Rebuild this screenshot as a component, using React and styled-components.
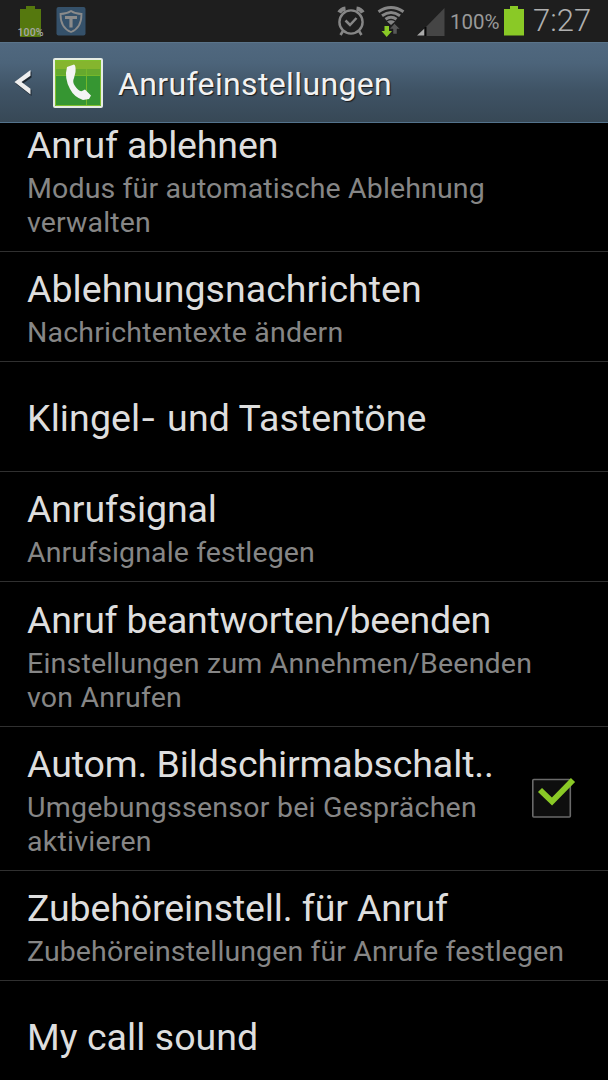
import React from 'react';
import styled, { createGlobalStyle } from 'styled-components';

const color = {
  status: '#1e1e1e',
  icon: '#868686',
  green: '#8ac926',
  title: '#dedede',
  summary: '#868686',
  divider: '#303030',
};

const GlobalStyle = createGlobalStyle`
  * {
    box-sizing: border-box;
  }

  body {
    margin: 0;
    background-color: #000;
    font-family: Roboto, 'Liberation Sans', sans-serif;
  }
`;

const Screen = styled.div`
  width: 608px;
  height: 1080px;
  display: flex;
  flex-direction: column;
  background-color: #000;
  overflow: hidden;
`;

const StatusBar = styled.div`
  height: 42px;
  flex-shrink: 0;
  display: flex;
  justify-content: space-between;
  background-color: ${color.status};
`;

const StatusGroup = styled.div`
  display: flex;
  align-items: center;
`;

const StatusIcon = styled.svg`
  display: block;
  flex-shrink: 0;
  margin-left: ${props => props.$gap || 0}px;
`;

const Percent = styled.span`
  width: 53px;
  margin-left: 5px;
  padding-top: 1px;
  font-size: 20.5px;
  letter-spacing: 0;
  line-height: 42px;
  color: #999;
  white-space: nowrap;
`;

const Clock = styled.span`
  width: 75px;
  margin-left: 9px;
  font-size: 31px;
  font-weight: 300;
  line-height: 42px;
  color: #b0b0b0;
  white-space: nowrap;
`;

const Header = styled.div`
  height: 81px;
  flex-shrink: 0;
  display: flex;
  align-items: center;
  background: linear-gradient(#50687f 0%, #4c647a 25%, #3f5365 60%, #374856 100%);
  border-top: 1px solid #5a748a;
  border-bottom: 1px solid #54738c;
`;

const HeaderTitle = styled.div`
  margin: 2px 0 0 15px;
  font-size: 32px;
  letter-spacing: 0.36px;
  line-height: 38px;
  color: #f2f2f2;
  text-shadow: 1px 1px 1px #1a1a1a;
`;

const List = styled.div`
  flex: 1;
  min-height: 0;
  overflow: hidden;
`;

const Row = styled.div`
  display: flex;
  align-items: center;
  height: ${props => props.$height}px;
  padding: ${props => props.$top}px 0 11px 27px;
  border-bottom: 1px solid ${color.divider};
`;

const RowText = styled.div`
  flex: 1;
`;

const Title = styled.div`
  font-size: 37.5px;
  letter-spacing: ${props => props.$spacing}px;
  line-height: 44px;
  color: ${color.title};
  white-space: nowrap;
`;

const Hyphen = styled.span`
  display: inline-block;
  margin: 0 4px 0 3px;
  transform: scaleX(1.25);
`;

const Summary = styled.div`
  margin-top: 5px;
  font-size: 28.5px;
  letter-spacing: ${props => props.$spacing}px;
  line-height: 33.7px;
  color: ${color.summary};
  white-space: pre-line;
`;

const Check = styled.svg`
  display: block;
  flex-shrink: 0;
  margin: 0 32px 5px 0;
`;

const SavedBattery = () => (
  <StatusIcon width="28" height="42" $gap={17}>
    <path d="M3 9h6V6h9v3h6v28H3z" fill="#55780e" />
    <text x="0.5" y="35.500" fontSize="10.500" fontWeight="500" fill="#a8a8a8" textLength="26">100%</text>
  </StatusIcon>
);

const Shield = () => (
  <StatusIcon width="30" height="42" $gap={11}>
    <rect x="0.5" y="7" width="29" height="28.5" rx="2" fill="#35516a" />
    <path
      d="M15 11C12 13 8 14 4.5 14C4.5 23 7 29 15 32C23 29 25.500 23 25.500 14C22 14 18 13 15 11Z"
      fill="none"
      stroke="#8b8b8b"
      strokeWidth="1.8"
    />
    <path d="M9 17.500h12M15 17.500v10" stroke="#8b8b8b" strokeWidth="3.200" />
  </StatusIcon>
);

const Alarm = () => (
  <StatusIcon width="28" height="42" fill="none" stroke={color.icon}>
    <circle cx="14" cy="22" r="11.600" strokeWidth="2.400" />
    <path d="M8.500 20.500L13 25L19.500 18" strokeWidth="2.500" />
    <path d="M2.200 12.500Q4 9 8.500 8.400M25.800 12.500Q24 9 19.500 8.400" strokeWidth="4" />
    <path d="M6 31L3.500 35M22 31L24.500 35" strokeWidth="2.600" />
  </StatusIcon>
);

const Wifi = () => (
  <StatusIcon width="28" height="42" $gap={12} fill="none">
    <g stroke={color.icon} strokeWidth="3">
      <path d="M1.500 11.700Q14 3.500 26.500 11.700" />
      <path d="M5 15.700Q14 9.300 23 15.700" />
      <path d="M8.500 19.200Q14 15.300 19.500 19.200" />
    </g>
    <path d="M10 21.500Q14 19 18 21.500L14 25z" fill={color.icon} />
    <path d="M7.500 26h4.500v5h3l-5.300 6L4.500 31h3z" fill={color.green} />
    <path d="M17.500 23.500l5.500 5.500h-3v5h-4v-5h-3.500z" fill="#585858" stroke={color.status} strokeWidth="0.500" />
  </StatusIcon>
);

const Signal = () => (
  <StatusIcon width="28" height="42" $gap={12}>
    <path d="M27.500 8v28H8.500V27.500z" fill="#454545" />
    <path d="M7.500 28.500V35.500H0z" fill="#aaa" />
    <path d="M8.500 27v9" stroke="#080808" strokeWidth="2" />
  </StatusIcon>
);

const Battery = () => (
  <StatusIcon width="20" height="42" $gap={1}>
    <path d="M0 9h6V6h8v3h6v26.500H0z" fill={color.green} />
  </StatusIcon>
);

const BackArrow = () => (
  <StatusIcon width="18" height="30" $gap={14}>
    <path d="M17.500 3.500L1.500 15.500L17.500 28V22L9 15.500L17.500 9.500z" fill="#1b252e" />
    <path d="M16.500 2L0.500 14L16.500 26.500V20.800L7.500 14L16.500 7.700z" fill="#eee" />
  </StatusIcon>
);

const PhoneIcon = () => (
  <StatusIcon width="50" height="50" $gap={21}>
    <rect width="50" height="50" rx="2" fill="#e6ece4" />
    <rect x="2" y="2" width="46" height="46" fill="#369632" />
    <path d="M2 2h46v12H2z" fill="#85b52e" />
    <path d="M2 11h46v6H2z" fill="#66a92e" />
    <path d="M2 17.500h46M33.500 11v37" stroke="#75b72b" strokeWidth="1" />
    <path d="M2.500 2.500h45v45h-45z" fill="none" stroke="#7fc02c" strokeWidth="1" />
    <path
      d="M14 9L21 6.500Q23 7 22.500 14L21 20Q19 24 22 28Q26 34 29 33L32 31.500L38 37.500L36 41L30 42Q21 39 17 31Q11 20 14 9Z"
      fill="#f4f4f4"
    />
  </StatusIcon>
);

const CheckBox = () => (
  <Check width="44" height="42">
    <rect x="0.800" y="2.500" width="37.500" height="37.500" rx="1" fill="#0e0e0e" stroke="#6a6a6a" strokeWidth="1.600" />
    <path d="M8 13L20 24.500L41 3" fill="none" stroke={color.green} strokeWidth="5.800" />
  </Check>
);

// spacing: letter spacing of the title and of the summary
const items = [
  { title: 'Anruf ablehnen', summary: 'Modus für automatische Ablehnung\nverwalten', height: 129, top: 0, spacing: [-0.15, 0.14] },
  { title: 'Ablehnungsnachrichten', summary: 'Nachrichtentexte ändern', height: 110, spacing: [0.03, 0.2] },
  { title: <>Klingel<Hyphen>-</Hyphen> und Tastentöne</>, height: 110, top: 14, spacing: [0.1] },
  { title: 'Anrufsignal', summary: 'Anrufsignale festlegen', height: 110, spacing: [-0.15, 0.12] },
  { title: 'Anruf beantworten/beenden', summary: 'Einstellungen zum Annehmen/Beenden\nvon Anrufen', height: 145, spacing: [-0.24, 0.2] },
  { title: 'Autom. Bildschirmabschalt..', summary: 'Umgebungssensor bei Gesprächen\naktivieren', height: 144, spacing: [-0.12, 0.25], checked: true },
  { title: 'Zubehöreinstell. für Anruf', summary: 'Zubehöreinstellungen für Anrufe festlegen', height: 110, spacing: [-0.12, 0.11] },
  { title: 'My call sound', height: 110, top: 14, spacing: [0.05] },
];

const App = () => {
  return (
    <Screen>
      <GlobalStyle />
      <StatusBar>
        <StatusGroup>
          <SavedBattery />
          <Shield />
        </StatusGroup>
        <StatusGroup>
          <Alarm />
          <Wifi />
          <Signal />
          <Percent>100%</Percent>
          <Battery />
          <Clock>7:27</Clock>
        </StatusGroup>
      </StatusBar>
      <Header>
        <BackArrow />
        <PhoneIcon />
        <HeaderTitle>Anrufeinstellungen</HeaderTitle>
      </Header>
      <List>
        {items.map((item, index) => (
          <Row key={index} $height={item.height} $top={item.top ?? 15}>
            <RowText>
              <Title $spacing={item.spacing[0]}>{item.title}</Title>
              {item.summary && <Summary $spacing={item.spacing[1]}>{item.summary}</Summary>}
            </RowText>
            {item.checked && <CheckBox />}
          </Row>
        ))}
      </List>
    </Screen>
  );
};

export default App;
